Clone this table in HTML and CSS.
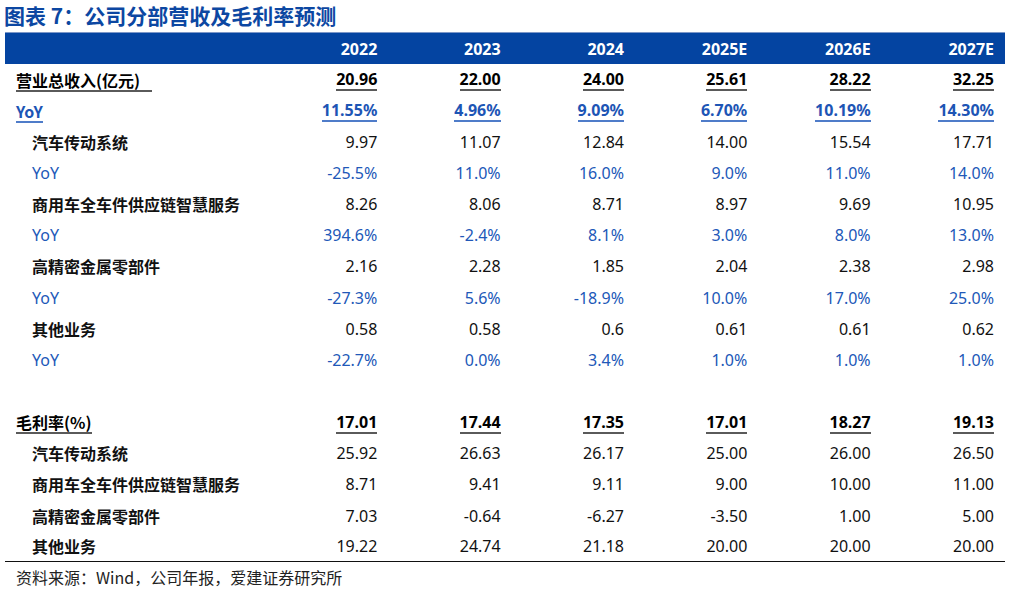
FILE: index.html
```html
<!DOCTYPE html>
<html lang="zh-CN">
<head>
<meta charset="utf-8">
<link rel="stylesheet" href="styles.css">
</head>
<body>
<div class="page">
  <h1 class="title">图表 7：公司分部营收及毛利率预测</h1>
  <table class="fin">
    <colgroup>
      <col class="c-label"><col class="c-num"><col class="c-num"><col class="c-num"><col class="c-num"><col class="c-num"><col class="c-num">
    </colgroup>
    <thead>
      <tr class="head">
        <th></th><th>2022</th><th>2023</th><th>2024</th><th>2025E</th><th>2026E</th><th>2027E</th>
      </tr>
    </thead>
    <tbody>
      <tr class="main">
        <td class="lbl"><span class="ul ul-label">营业总收入(亿元)</span></td>
        <td><span class="ul">20.96</span></td><td><span class="ul">22.00</span></td><td><span class="ul">24.00</span></td><td><span class="ul">25.61</span></td><td><span class="ul">28.22</span></td><td><span class="ul">32.25</span></td>
      </tr>
      <tr class="main yoy">
        <td class="lbl"><span class="ul">YoY</span></td>
        <td><span class="ul">11.55%</span></td><td><span class="ul">4.96%</span></td><td><span class="ul">9.09%</span></td><td><span class="ul">6.70%</span></td><td><span class="ul">10.19%</span></td><td><span class="ul">14.30%</span></td>
      </tr>
      <tr class="sub">
        <td class="lbl">汽车传动系统</td>
        <td>9.97</td><td>11.07</td><td>12.84</td><td>14.00</td><td>15.54</td><td>17.71</td>
      </tr>
      <tr class="subyoy">
        <td class="lbl">YoY</td>
        <td>-25.5%</td><td>11.0%</td><td>16.0%</td><td>9.0%</td><td>11.0%</td><td>14.0%</td>
      </tr>
      <tr class="sub">
        <td class="lbl">商用车全车件供应链智慧服务</td>
        <td>8.26</td><td>8.06</td><td>8.71</td><td>8.97</td><td>9.69</td><td>10.95</td>
      </tr>
      <tr class="subyoy">
        <td class="lbl">YoY</td>
        <td>394.6%</td><td>-2.4%</td><td>8.1%</td><td>3.0%</td><td>8.0%</td><td>13.0%</td>
      </tr>
      <tr class="sub">
        <td class="lbl">高精密金属零部件</td>
        <td>2.16</td><td>2.28</td><td>1.85</td><td>2.04</td><td>2.38</td><td>2.98</td>
      </tr>
      <tr class="subyoy">
        <td class="lbl">YoY</td>
        <td>-27.3%</td><td>5.6%</td><td>-18.9%</td><td>10.0%</td><td>17.0%</td><td>25.0%</td>
      </tr>
      <tr class="sub">
        <td class="lbl">其他业务</td>
        <td>0.58</td><td>0.58</td><td>0.6</td><td>0.61</td><td>0.61</td><td>0.62</td>
      </tr>
      <tr class="subyoy">
        <td class="lbl">YoY</td>
        <td>-22.7%</td><td>0.0%</td><td>3.4%</td><td>1.0%</td><td>1.0%</td><td>1.0%</td>
      </tr>
      <tr class="blank">
        <td></td><td></td><td></td><td></td><td></td><td></td><td></td>
      </tr>
      <tr class="main">
        <td class="lbl"><span class="ul">毛利率(%)</span></td>
        <td><span class="ul">17.01</span></td><td><span class="ul">17.44</span></td><td><span class="ul">17.35</span></td><td><span class="ul">17.01</span></td><td><span class="ul">18.27</span></td><td><span class="ul">19.13</span></td>
      </tr>
      <tr class="sub">
        <td class="lbl">汽车传动系统</td>
        <td>25.92</td><td>26.63</td><td>26.17</td><td>25.00</td><td>26.00</td><td>26.50</td>
      </tr>
      <tr class="sub">
        <td class="lbl">商用车全车件供应链智慧服务</td>
        <td>8.71</td><td>9.41</td><td>9.11</td><td>9.00</td><td>10.00</td><td>11.00</td>
      </tr>
      <tr class="sub">
        <td class="lbl">高精密金属零部件</td>
        <td>7.03</td><td>-0.64</td><td>-6.27</td><td>-3.50</td><td>1.00</td><td>5.00</td>
      </tr>
      <tr class="sub last">
        <td class="lbl">其他业务</td>
        <td>19.22</td><td>24.74</td><td>21.18</td><td>20.00</td><td>20.00</td><td>20.00</td>
      </tr>
    </tbody>
  </table>
  <p class="source">资料来源：Wind，公司年报，爱建证券研究所</p>
</div>
</body>
</html>
```

FILE: styles.css
```css
html, body {
  margin: 0;
  padding: 0;
  background: #ffffff;
}

body {
  font-family: "Noto Sans", "Noto Sans CJK SC", sans-serif;
  color: #111111;
}

.page {
  width: 1011px;
  height: 593px;
  overflow: hidden;
}

.title {
  margin: 0;
  padding: 3px 0 0 4px;
  height: 29px;
  box-sizing: border-box;
  font-size: 21px;
  line-height: 25px;
  font-weight: 700;
  color: #0c47a2;
  font-family: "Noto Sans CJK SC", "Noto Sans", sans-serif;
}

.fin {
  margin: 3px 0 0 5px;
  width: 1000px;
  border-collapse: collapse;
  table-layout: fixed;
  border-bottom: 1px solid #111111;
}

.c-label { width: 260px; }
.c-num { width: 123.33px; }

.fin th,
.fin td {
  height: 31.15px;
  padding: 0 11px 0 0;
  text-align: right;
  font-size: 16px;
  white-space: nowrap;
  vertical-align: middle;
  box-sizing: border-box;
}

.fin tbody td {
  padding-top: 1px;
}

.head th {
  background: #0444a1;
  color: #ffffff;
  font-weight: 700;
  height: 31px;
  border-top: 1px solid #7c97c8;
  padding-top: 1px;
}

.fin td.lbl {
  text-align: left;
  padding-left: 27px;
  font-family: "Noto Sans CJK SC", "Noto Sans", sans-serif;
}

.main td {
  font-weight: 700;
  color: #000000;
}

.main td.lbl {
  padding-left: 11px;
}

.main .ul {
  display: inline-block;
  line-height: 19px;
  border-bottom: 2px solid #5a5a5a;
}

.main .ul-label {
  padding-right: 12px;
}

.main.yoy td {
  color: #1d55b5;
}

.main.yoy .ul {
  border-bottom: 2px solid #4f7cc9;
}

.sub td {
  color: #111111;
}

.sub td.lbl {
  font-weight: 700;
}

.subyoy td {
  color: #2158b8;
}

.subyoy td.lbl {
  font-family: "Noto Sans", "Noto Sans CJK SC", sans-serif;
}

.source {
  margin: 4px 0 0 16px;
  font-size: 16px;
  line-height: 22px;
  color: #222222;
  font-family: "Noto Sans CJK SC", "Noto Sans", sans-serif;
}
```
